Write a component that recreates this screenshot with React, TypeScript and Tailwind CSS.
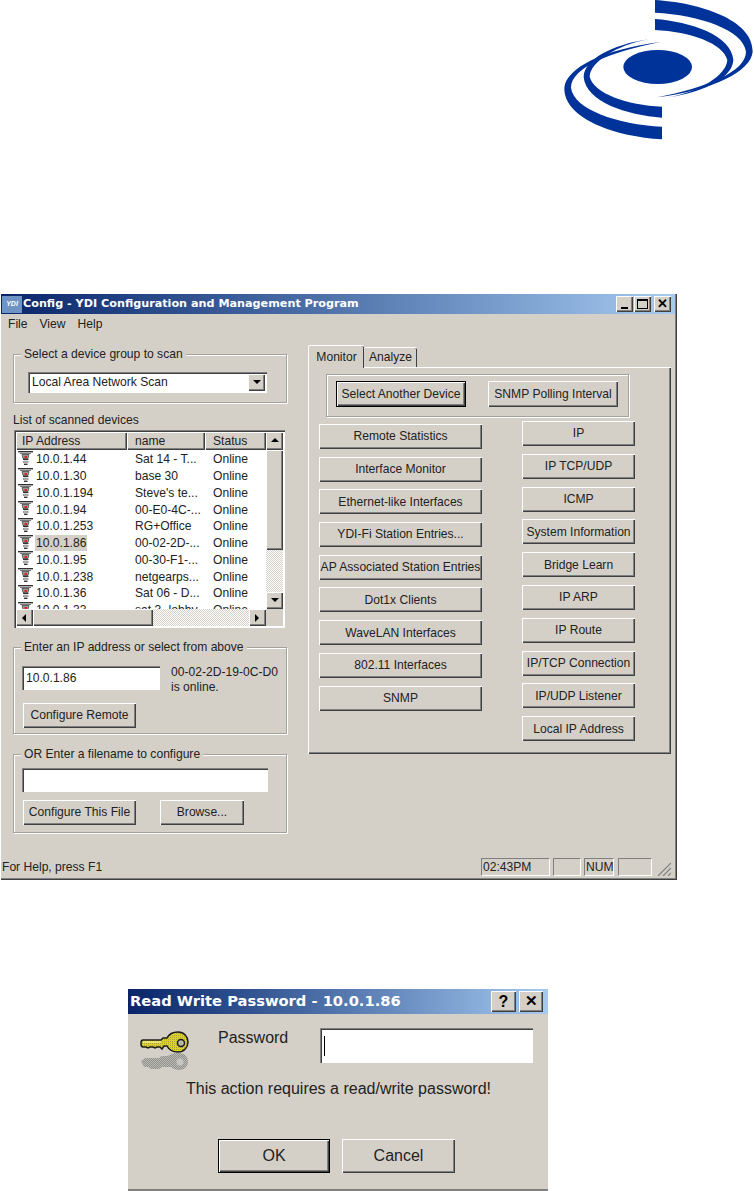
import type { ReactNode } from 'react';

const raised =
  'bg-[#d4d0c8] shadow-[inset_1px_1px_0_#fff,inset_-1px_-1px_0_#404040,inset_-2px_-2px_0_#808080]';
const sunken =
  'bg-white shadow-[inset_1px_1px_0_#808080,inset_2px_2px_0_#404040,inset_-1px_-1px_0_#fff]';
const dither =
  'bg-[repeating-conic-gradient(#fff_0_25%,#d4d0c8_0_50%)] bg-[length:2px_2px]';

const devices = [
  ['10.0.1.44', 'Sat 14 - T...'],
  ['10.0.1.30', 'base 30'],
  ['10.0.1.194', "Steve's te..."],
  ['10.0.1.94', '00-E0-4C-...'],
  ['10.0.1.253', 'RG+Office'],
  ['10.0.1.86', '00-02-2D-...'],
  ['10.0.1.95', '00-30-F1-...'],
  ['10.0.1.238', 'netgearps...'],
  ['10.0.1.36', 'Sat 06 - D...'],
  ['10.0.1.33', 'sat 3 -lobby'],
];

const leftButtons = [
  'Remote Statistics',
  'Interface Monitor',
  'Ethernet-like Interfaces',
  'YDI-Fi Station Entries...',
  'AP Associated Station Entries',
  'Dot1x Clients',
  'WaveLAN Interfaces',
  '802.11 Interfaces',
  'SNMP',
];

const rightButtons = [
  'IP',
  'IP TCP/UDP',
  'ICMP',
  'System Information',
  'Bridge Learn',
  'IP ARP',
  'IP Route',
  'IP/TCP Connection',
  'IP/UDP Listener',
  'Local IP Address',
];

function Logo() {
  const outer = 'M345 0C480 8 640 60 638 155C632 215 520 270 350 292C500 262 618 215 618 155C610 90 480 45 345 38Z';
  const inner = 'M345 57C450 65 575 105 580 180C578 230 500 275 385 292C480 275 560 225 562 180C550 130 450 95 345 90Z';
  return (
    <svg viewBox="0 0 642 450" className="h-[150px] w-[214px]" fill="#003399">
      <path d={outer} />
      <path d={inner} />
      <g transform="rotate(180 355.5 209)">
        <path d={outer} />
        <path d={inner} transform="translate(0 8)" />
      </g>
      <ellipse cx="353" cy="201" rx="103" ry="51" />
    </svg>
  );
}

function DeviceIcon() {
  return (
    <svg viewBox="0 0 16 17" className="h-[17px] w-[16px] shrink-0">
      <rect x="1" y="0" width="15" height="1.4" fill="#333" />
      <rect x="3" y="2" width="11" height="1" fill="#777" />
      <path d="M5 3.500h7l-1 4H6z" fill="#999" stroke="#333" strokeWidth="0.7" />
      <rect x="7.500" y="5" width="2.500" height="2" fill="#d22" />
      <path d="M6 8.500h5.500M6 11h5.500M7 13.500h3.500" stroke="#333" strokeWidth="1.200" />
      <path d="M7 9.500h3.500v3.500H7z" fill="#aaa" />
    </svg>
  );
}

function KeyIcon() {
  return (
    <svg viewBox="0 0 60 50" className="h-[50px] w-[60px]">
      <defs>
        <pattern id="keyShadow" width="2" height="2" patternUnits="userSpaceOnUse">
          <rect width="1" height="1" fill="#8f8f8b" />
          <rect x="1" y="1" width="1" height="1" fill="#8f8f8b" />
          <rect x="1" width="1" height="1" fill="#bdbbb5" />
          <rect y="1" width="1" height="1" fill="#bdbbb5" />
        </pattern>
        <pattern id="keyFill" width="2" height="2" patternUnits="userSpaceOnUse">
          <rect width="2" height="2" fill="#dcd41c" />
          <rect width="1" height="1" fill="#a8a438" />
        </pattern>
      </defs>
      <path
        d="M7 36l4-3h14l3-2h5l3-1c3-2 6-2 9-2c6 0 9 4 9 8.500s-3 8.500-9 8.500c-3 0-6-1-8-3H28l-3 2h-8l-3-2h-4z"
        fill="url(#keyShadow)"
      />
      <circle cx="46" cy="37" r="3.500" fill="#c8c6c0" />
      <path
        d="M7 18c0-2 1-3 2-3h18l2-2h4c2-4 6-6 11-6c6 0 10 4.500 10 10s-4 10-10 10c-5 0-9-2-11-6h-3l-2 3l-2-2h-3l-2 1l-2-1h-3l-2 1l-2-1H9c-1 0-2-1-2-3z"
        fill="url(#keyFill)"
        stroke="#1c1c1c"
        strokeWidth="1.500"
      />
      <path d="M9 17h18" stroke="#f2ee80" strokeWidth="1.500" />
      <circle cx="47" cy="18" r="3.500" fill="#b8b6b0" stroke="#1c1c1c" strokeWidth="1.500" />
    </svg>
  );
}

function Btn({ className, children }: { className: string; children: ReactNode }) {
  return (
    <div className={`${raised} flex shrink-0 items-center justify-center whitespace-nowrap ${className}`}>
      {children}
    </div>
  );
}

function Group({ title, className, children }: { title: string; className: string; children?: ReactNode }) {
  return (
    <div className={`w-[274px] shrink-0 border border-[#a4a29c] shadow-[1px_1px_0_#fff,inset_1px_1px_0_#fff] ${className}`}>
      <div className="ml-[7px] -mt-[8px] w-fit whitespace-nowrap bg-[#d4d0c8] px-[3px] leading-[14px]">{title}</div>
      {children}
    </div>
  );
}

function Arrow({ dir }: { dir: 'up' | 'down' | 'left' | 'right' }) {
  const points = {
    up: '4,1 0,5 8,5',
    down: '0,1 8,1 4,5',
    left: '5,0 5,8 1,4',
    right: '1,0 1,8 5,4',
  }[dir];
  return (
    <svg viewBox="0 0 8 8" className="h-[8px] w-[8px]">
      <polygon points={points} fill="#000" />
    </svg>
  );
}

function DeviceList() {
  return (
    <div className={`${sunken} mt-[3px] ml-px flex h-[198px] w-[271px] flex-col p-[2px]`}>
      <div className="flex min-h-0 flex-1">
        <div className="flex w-[250px] flex-col overflow-hidden">
          <div className="mb-px flex h-[18px] shrink-0">
            <div className={`${raised} flex w-[111px] items-center pl-[6px]`}>IP Address</div>
            <div className={`${raised} flex w-[78px] items-center pl-[8px]`}>name</div>
            <div className={`${raised} flex w-[61px] items-center pl-[8px]`}>Status</div>
          </div>
          {devices.map(([ip, name]) => (
            <div key={ip} className="flex h-[16.75px] shrink-0 items-center">
              <div className="flex w-[111px] items-center pl-[1px]">
                <DeviceIcon />
                <span className={`ml-[2px] pr-[1px] pl-[1px] leading-[16px] ${ip === '10.0.1.86' ? 'bg-[#d4d0c8]' : ''}`}>{ip}</span>
              </div>
              <div className="w-[78px] pl-[8px] whitespace-nowrap">{name}</div>
              <div className="pl-[8px]">Online</div>
            </div>
          ))}
        </div>
        <div className="flex w-[17px] flex-col">
          <Btn className="h-[18px]"><Arrow dir="up" /></Btn>
          <div className={`${raised} h-[100px] shrink-0`} />
          <div className={`${dither} flex-1`} />
          <Btn className="h-[17px]"><Arrow dir="down" /></Btn>
        </div>
      </div>
      <div className="flex h-[17px] shrink-0">
        <Btn className="w-[17px]"><Arrow dir="left" /></Btn>
        <div className={`${raised} w-[120px] shrink-0`} />
        <div className={`${dither} w-[96px]`} />
        <Btn className="w-[17px]"><Arrow dir="right" /></Btn>
        <div className="flex-1 bg-[#d4d0c8]" />
      </div>
    </div>
  );
}

function LeftColumn() {
  return (
    <div className="ml-[12px] flex w-[274px] flex-col pt-[20px]">
      <Group title="Select a device group to scan" className="h-[49px]">
        <div className={`${sunken} mt-[11px] ml-[14px] flex h-[21px] w-[239px] items-center justify-between pr-[2px] pl-[4px]`}>
          <span>Local Area Network Scan</span>
          <Btn className="h-[17px] w-[17px]"><Arrow dir="down" /></Btn>
        </div>
      </Group>
      <div className="mt-[10px] h-[14px] leading-[14px]">List of scanned devices</div>
      <DeviceList />
      <Group title="Enter an IP address or select from above" className="mt-[19px] h-[87px]">
        <div className="mt-[12px] ml-[8px] flex">
          <div className={`${sunken} flex h-[24px] w-[138px] items-center pl-[4px]`}>10.0.1.86</div>
          <div className="-mt-px ml-[11px] leading-[15px]">
            00-02-2D-19-0C-D0
            <br />
            is online.
          </div>
        </div>
        <Btn className="mt-[8px] ml-[9px] h-[25px] w-[113px]">Configure Remote</Btn>
      </Group>
      <Group title="OR Enter a filename to configure" className="mt-[20px] h-[79px]">
        <div className={`${sunken} mt-[7px] ml-[8px] h-[24px] w-[246px]`} />
        <div className="mt-[8px] ml-[9px] flex">
          <Btn className="h-[25px] w-[113px]">Configure This File</Btn>
          <Btn className="ml-[24px] h-[25px] w-[84px]">Browse...</Btn>
        </div>
      </Group>
    </div>
  );
}

function RightColumn() {
  return (
    <div className="ml-[21px] flex flex-col pt-[11px]">
      <div className="flex h-[22px] items-end">
        <div className="relative -mb-px flex h-[23px] w-[56px] items-center justify-center rounded-t-[2px] border-t border-l border-white bg-[#d4d0c8] shadow-[inset_-1px_0_0_#404040]">Monitor</div>
        <div className="flex h-[20px] w-[53px] items-center justify-center rounded-t-[2px] border-t border-white bg-[#d4d0c8] shadow-[inset_-1px_0_0_#404040]">Analyze</div>
      </div>
      <div className="h-[387px] w-[363px] bg-[#d4d0c8] shadow-[inset_1px_1px_0_#fff,inset_-1px_-1px_0_#404040,inset_-2px_-2px_0_#808080]">
        <div className="ml-[18px] flex h-[50px] items-end">
          <div className="flex h-[43px] w-[303px] items-start border border-[#a4a29c] pt-[6px] pl-[9px] shadow-[1px_1px_0_#fff,inset_1px_1px_0_#fff]">
            <Btn className="h-[26px] w-[130px] border border-black">Select Another Device</Btn>
            <Btn className="ml-[22px] h-[26px] w-[130px]">SNMP Polling Interval</Btn>
          </div>
        </div>
        <div className="mt-[4px] flex items-start">
          <div className="mt-[3px] ml-[11px] flex w-[163px] flex-col gap-[7.7px]">
            {leftButtons.map((label) => (
              <Btn key={label} className="h-[25px]">{label}</Btn>
            ))}
          </div>
          <div className="ml-[40px] flex w-[113px] flex-col gap-[7.8px]">
            {rightButtons.map((label) => (
              <Btn key={label} className="h-[25px]">{label}</Btn>
            ))}
          </div>
        </div>
      </div>
    </div>
  );
}

function StatusBar() {
  const cell = 'flex h-[18px] items-center border-t border-l border-[#808080] border-r border-b border-r-white border-b-white';
  return (
    <div className="flex h-[22px] items-center">
      <div className="ml-[1px] w-[479px]">For Help, press F1</div>
      <div className={`${cell} w-[69px] pl-[1px]`}>02:43PM</div>
      <div className={`${cell} ml-[3px] w-[28px]`} />
      <div className={`${cell} ml-[3px] w-[30px] pl-[1px]`}>NUM</div>
      <div className={`${cell} ml-[4px] w-[34px]`} />
      <svg viewBox="0 0 14 14" className="mt-[4px] ml-[5px] h-[14px] w-[14px]" stroke="#808080" strokeWidth="1.200">
        <path d="M1 14L14 1M6 14L14 6M11 14L14 11" />
      </svg>
    </div>
  );
}

function TitleButton({ children, className }: { children: ReactNode; className: string }) {
  return (
    <div className={`${raised} flex items-center justify-center font-bold text-black ${className}`}>{children}</div>
  );
}

function ConfigWindow() {
  return (
    <div className="mt-[144px] ml-px flex h-[586px] w-[676px] flex-col bg-[#d4d0c8] font-['Liberation_Sans',sans-serif] text-[12.1px] text-[#222] shadow-[inset_-1px_-1px_0_#404040,inset_-2px_-2px_0_#808080]">
      <div className="mr-[2px] flex h-[20px] shrink-0 items-center bg-gradient-to-r from-[#0a246a] to-[#a6caf0] pr-[4px] pl-[1px]">
        <div className="flex h-[17px] w-[20px] items-center justify-center bg-[#6f94c4] text-[7px] font-bold text-white italic">YDI</div>
        <span className="ml-[1px] font-['DejaVu_Sans',sans-serif] text-[11.2px] font-bold whitespace-nowrap text-white">
          Config - YDI Configuration and Management Program
        </span>
        <div className="ml-auto flex">
          <TitleButton className="h-[16px] w-[17px]">
            <span className="mt-[8px] h-[2px] w-[7px] bg-black" />
          </TitleButton>
          <TitleButton className="ml-px h-[16px] w-[17px]">
            <span className="h-[10px] w-[11px] border border-t-2 border-black" />
          </TitleButton>
          <TitleButton className="ml-[3px] h-[16px] w-[17px] text-[13px]">✕</TitleButton>
        </div>
      </div>
      <div className="flex h-[20px] shrink-0 items-center gap-[12px] pl-[7px]">
        <span>File</span>
        <span>View</span>
        <span>Help</span>
      </div>
      <div className="flex h-[522px] shrink-0">
        <LeftColumn />
        <RightColumn />
      </div>
      <StatusBar />
    </div>
  );
}

function PasswordDialog() {
  return (
    <div className="mt-[109px] ml-[128px] flex h-[202px] w-[420px] flex-col bg-[#d4d0c8] font-['Liberation_Sans',sans-serif] text-[16px] text-[#222]">
      <div className="flex h-[25px] shrink-0 items-center bg-gradient-to-r from-[#0a246a] to-[#a6caf0] pr-[5px] pl-[2px]">
        <span className="font-['DejaVu_Sans',sans-serif] text-[14.7px] font-bold whitespace-nowrap text-white">Read Write Password - 10.0.1.86</span>
        <div className="ml-auto flex gap-[3px]">
          <TitleButton className="h-[21px] w-[25px] text-[16px]">?</TitleButton>
          <TitleButton className="h-[21px] w-[24px] text-[15px]">✕</TitleButton>
        </div>
      </div>
      <div className="mt-[14px] flex items-start">
        <div className="-mt-[3px] ml-[6px]"><KeyIcon /></div>
        <span className="mt-[1px] ml-[24px] leading-[18px]">Password</span>
        <div className={`${sunken} ml-[32px] flex h-[35px] w-[213px] items-center pl-[4px]`}>
          <span className="h-[20px] w-px bg-black" />
        </div>
      </div>
      <div className="mt-[4px] ml-[58px] leading-[20px]">This action requires a read/write password!</div>
      <div className="mt-[40px] ml-[90px] flex">
        <Btn className="h-[34px] w-[112px] border border-black">OK</Btn>
        <Btn className="ml-[12px] h-[34px] w-[113px]">Cancel</Btn>
      </div>
      <div className="mt-auto h-[2px] bg-[#808080]" />
    </div>
  );
}

export default function App() {
  return (
    <div className="h-[1191px] w-[754px] overflow-hidden bg-white">
      <div className="flex justify-end"><Logo /></div>
      <ConfigWindow />
      <PasswordDialog />
    </div>
  );
}
